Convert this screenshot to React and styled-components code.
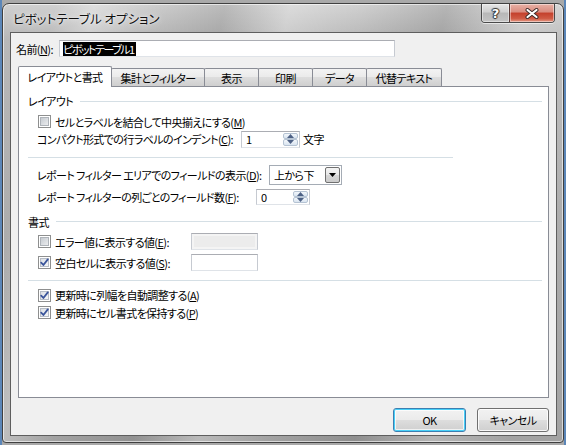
import styled, { createGlobalStyle } from 'styled-components';

const Global = createGlobalStyle`
  html, body { margin: 0; padding: 0; }
  body {
    width: 566px;
    height: 445px;
    overflow: hidden;
    background: linear-gradient(90deg, #5b86b8 0 2px, #a9a9a9 2px 564px, #5b86b8 564px);
    font-family: "Noto Sans CJK JP", "Noto Sans", sans-serif;
    font-feature-settings: "palt";
    font-size: 11px;
    letter-spacing: -0.6px;
    color: #000;
  }
  * { box-sizing: border-box; }
`;

const Window = styled.div`
  width: 562px;
  height: 440px;
  margin: 3px 0 0 2px;
  border: 1px solid #404040;
  border-radius: 7px 7px 4px 4px;
  padding: 0 6px 6px 7px;
  display: flex;
  flex-direction: column;
  background:
    linear-gradient(102deg, rgba(255,255,255,0) 8%, rgba(255,255,255,0.3) 14%, rgba(255,255,255,0) 22%,
      rgba(0,0,0,0.1) 34%, rgba(255,255,255,0.25) 44%, rgba(255,255,255,0) 55%,
      rgba(0,0,0,0.12) 68%, rgba(255,255,255,0.22) 80%, rgba(255,255,255,0) 92%),
    linear-gradient(180deg, #d0d0d0 0%, #b8b8b8 8%, #aaaaaa 60%, #a2a2a2 100%);
  box-shadow: inset 0 0 0 1px rgba(255,255,255,0.6);
`;

const TitleBar = styled.div`
  height: 28px;
  display: flex;
  align-items: flex-start;
`;

const Title = styled.div`
  align-self: center;
  padding-left: 3px;
  font-size: 12.5px;
  letter-spacing: 0;
  color: #111;
  text-shadow: 0 0 6px rgba(255,255,255,0.9), 0 0 2px rgba(255,255,255,0.8);
`;

const CaptionButtons = styled.div`
  margin-left: auto;
  margin-right: 2px;
  display: flex;
  height: 19px;
  border: 1px solid #4a4a4a;
  border-top: none;
  border-radius: 0 0 4px 4px;
  overflow: hidden;
  box-shadow: 0 1px 0 rgba(255,255,255,0.6);
`;

const CaptionButton = styled.div`
  width: ${(p) => p.$w}px;
  display: flex;
  align-items: center;
  justify-content: center;
  border-left: ${(p) => (p.$close ? '1px solid #5a3a36' : 'none')};
  box-shadow: inset 0 0 0 1px rgba(255,255,255,0.45);
  background: ${(p) =>
    p.$close
      ? 'linear-gradient(180deg, #e8b1a6 0%, #d98b7e 45%, #c4402c 50%, #cf5a44 80%, #e59a86 100%)'
      : 'linear-gradient(180deg, #e6e6e6 0%, #cfcfcf 45%, #b7b7b7 50%, #c4c4c4 100%)'};
  color: #fff;
  font-family: "DejaVu Sans", sans-serif;
  font-weight: bold;
  font-size: 13px;
  letter-spacing: 0;
  text-shadow: 0 0 1px #333, 1px 0 1px #333, -1px 0 1px #333, 0 1px 1px #333, 0 -1px 1px #333;
`;

const Client = styled.div`
  flex: 1;
  border: 1px solid #5e5e5e;
  background: #f0f0f0;
  padding: 7px 7px 0 5px;
  display: flex;
  flex-direction: column;
`;

const NameRow = styled.div`
  display: flex;
  align-items: center;
  height: 17px;
`;

const NameLabel = styled.span`
  width: 43px;
  white-space: nowrap;
`;

const TextBox = styled.div`
  width: ${(p) => p.$w}px;
  height: ${(p) => p.$h || 17}px;
  border: 1px solid #abadb3;
  border-left-color: #c6cad1;
  border-right-color: #c6cad1;
  border-bottom-color: #dfe3e8;
  background: ${(p) => (p.$disabled ? '#ececec' : '#fff')};
  box-shadow: ${(p) => (p.$disabled ? 'inset 0 0 0 2px #f4f4f4' : 'none')};
  display: flex;
  align-items: center;
  padding-left: 3px;
  overflow: hidden;
  white-space: nowrap;
`;

const Selected = styled.span`
  background: #000;
  color: #fff;
  line-height: 14px;
  letter-spacing: -1.5px;
  padding-right: 2px;
`;

const TabBar = styled.div`
  margin: 9px 0 0 2px;
  height: 20px;
  display: flex;
  align-items: flex-end;
`;

const Tab = styled.div`
  width: ${(p) => p.$w}px;
  height: ${(p) => (p.$active ? 21 : 18)}px;
  margin-left: ${(p) => (p.$first ? 0 : -1)}px;
  margin-bottom: ${(p) => (p.$active ? -1 : 0)}px;
  position: relative;
  z-index: ${(p) => (p.$active ? 2 : 1)};
  border: 1px solid #898c95;
  border-bottom: none;
  border-radius: 2px 2px 0 0;
  background: ${(p) =>
    p.$active
      ? '#fff'
      : 'linear-gradient(180deg, #f3f3f3 0%, #ebebeb 45%, #dddddd 50%, #cfcfcf 100%)'};
  display: flex;
  align-items: center;
  justify-content: center;
  white-space: nowrap;
  padding-top: ${(p) => (p.$active ? 0 : 1)}px;
`;

const Panel = styled.div`
  margin-left: 2px;
  height: 312px;
  border: 1px solid #898c95;
  background: #fff;
  padding: 5px 6px 0 9px;
  display: flex;
  flex-direction: column;
`;

const Header = styled.div`
  display: flex;
  align-items: center;
  height: ${(p) => p.$h}px;
  margin-top: ${(p) => p.$mt || 0}px;
  &::after {
    content: '';
    flex: 1;
    height: 1px;
    margin-left: 7px;
    background: #d5dfe5;
  }
`;

const Row = styled.div`
  display: flex;
  align-items: center;
  height: ${(p) => p.$h}px;
  margin-top: ${(p) => p.$mt || 0}px;
  padding-left: 9px;
`;

const Label = styled.div`
  width: ${(p) => p.$w}px;
  white-space: nowrap;
`;

const CheckLabel = styled.label`
  display: flex;
  align-items: center;
  margin-left: 1px;
  white-space: nowrap;
  svg { margin-right: 4px; flex: none; }
`;

const Unit = styled.span`
  margin-left: 3px;
`;

const Separator = styled.div`
  height: 1px;
  width: ${(p) => (p.$w ? `${p.$w}px` : 'auto')};
  margin-top: ${(p) => p.$mt}px;
  background: #d5dfe5;
`;

const Spin = styled.div`
  width: ${(p) => p.$w}px;
  height: ${(p) => p.$h}px;
  border: 1px solid #abadb3;
  border-left-color: #c6cad1;
  border-right-color: #c6cad1;
  border-bottom-color: #dfe3e8;
  background: #fff;
  display: flex;
  align-items: center;
  padding: 0 1px 0 4px;
`;

const SpinValue = styled.span`
  flex: 1;
`;

const SpinButtons = styled.div`
  width: 15px;
  height: 100%;
  display: flex;
  flex-direction: column;
  padding: 1px 0;
`;

const SpinHalf = styled.div`
  flex: 1;
  display: flex;
  align-items: center;
  justify-content: center;
  border: 1px solid #b5c3d3;
  border-radius: 2px;
  background: linear-gradient(180deg, #f3f7fb 0%, #d9e4f0 100%);
`;

const Combo = styled.div`
  width: 73px;
  height: 20px;
  border: 1px solid #a5acb5;
  background: #fff;
  display: flex;
  align-items: center;
  padding: 1px 1px 1px 4px;
`;

const ComboText = styled.span`
  flex: 1;
  white-space: nowrap;
`;

const ComboButton = styled.div`
  width: 15px;
  height: 100%;
  border: 1px solid #707070;
  border-radius: 2px;
  background: linear-gradient(180deg, #f4f4f4 0%, #e8e8e8 48%, #d6d6d6 52%, #cbcbcb 100%);
  display: flex;
  align-items: center;
  justify-content: center;
`;

const Footer = styled.div`
  margin-top: 10px;
  display: flex;
  justify-content: flex-end;
  gap: 11px;
`;

const Button = styled.div`
  width: ${(p) => p.$w}px;
  height: 24px;
  border: 1px solid ${(p) => (p.$default ? '#3c7fb1' : '#707070')};
  border-radius: 3px;
  box-shadow: ${(p) =>
    p.$default ? 'inset 0 0 0 1px #48d0f8, inset 0 0 0 2px rgba(255,255,255,0.7)' : 'inset 0 0 0 1px rgba(255,255,255,0.85)'};
  background: linear-gradient(180deg, #f2f2f2 0%, #ebebeb 48%, #dddddd 52%, #cfcfcf 100%);
  display: flex;
  align-items: center;
  justify-content: center;
  white-space: nowrap;
`;

const CheckBox = ({ checked }) => (
  <svg width="13" height="13" viewBox="0 0 13 13">
    <defs>
      <linearGradient id={checked ? 'cbOn' : 'cbOff'} x1="0" y1="0" x2="1" y2="1">
        <stop offset="0" stopColor={checked ? '#d9dde3' : '#c3c8ce'} />
        <stop offset="1" stopColor={checked ? '#f7f8f9' : '#eeeff1'} />
      </linearGradient>
    </defs>
    <rect x="0.5" y="0.5" width="12" height="12" fill="#fff" stroke="#8e8f8f" />
    <rect x="2.5" y="2.5" width="8" height="8" fill={`url(#${checked ? 'cbOn' : 'cbOff'})`} stroke={checked ? '#b6bcc6' : '#aeb3b9'} />
    {checked && (
      <path d="M3.2 6.6 L5.4 9 L9.8 3.4" fill="none" stroke="#3a549b" strokeWidth="1.8" strokeLinecap="round" strokeLinejoin="round" />
    )}
  </svg>
);

const Arrow = ({ up, color = '#4d6185' }) => (
  <svg width="7" height="4" viewBox="0 0 7 4">
    <path d={up ? 'M0 4 L3.5 0 L7 4 Z' : 'M0 0 L7 0 L3.5 4 Z'} fill={color} />
  </svg>
);

const Spinner = ({ value, w, h }) => (
  <Spin $w={w} $h={h}>
    <SpinValue>{value}</SpinValue>
    <SpinButtons>
      <SpinHalf><Arrow up /></SpinHalf>
      <SpinHalf><Arrow /></SpinHalf>
    </SpinButtons>
  </Spin>
);

const tabs = [
  ['レイアウトと書式', 94],
  ['集計とフィルター', 94],
  ['表示', 55],
  ['印刷', 55],
  ['データ', 55],
  ['代替テキスト', 76],
];

export default function App() {
  return (
    <>
      <Global />
      <Window>
        <TitleBar>
          <Title>ピボットテーブル オプション</Title>
          <CaptionButtons>
            <CaptionButton $w={27}>?</CaptionButton>
            <CaptionButton $w={45} $close>
              <svg width="14" height="11" viewBox="0 0 14 11">
                <path d="M2.5 2 L11.5 9 M11.5 2 L2.5 9" stroke="#3a2a28" strokeWidth="4" strokeLinecap="round" />
                <path d="M2.5 2 L11.5 9 M11.5 2 L2.5 9" stroke="#fff" strokeWidth="2.2" strokeLinecap="round" />
              </svg>
            </CaptionButton>
          </CaptionButtons>
        </TitleBar>
        <Client>
          <NameRow>
            <NameLabel>名前(<u>N</u>):</NameLabel>
            <TextBox $w={336} $h={17}>
              <Selected>ピボットテーブル1</Selected>
            </TextBox>
          </NameRow>

          <TabBar>
            {tabs.map(([t, w], i) => (
              <Tab key={t} $w={w} $first={i === 0} $active={i === 0}>{t}</Tab>
            ))}
          </TabBar>

          <Panel>
            <Header $h={18}>レイアウト</Header>
            <Row $h={17} $mt={3}>
              <CheckLabel><CheckBox /><span>セルとラベルを結合して中央揃えにする(<u>M</u>)</span></CheckLabel>
            </Row>
            <Row $h={18}>
              <Label $w={204}>コンパクト形式での行ラベルのインデント(<u>C</u>):</Label>
              <Spinner value="1" w={59} h={17} />
              <Unit>文字</Unit>
            </Row>
            <Separator $mt={9} $w={425} />
            <Row $h={22} $mt={6}>
              <Label $w={232}>レポート フィルター エリアでのフィールドの表示(<u>D</u>):</Label>
              <Combo>
                <ComboText>上から下</ComboText>
                <ComboButton><Arrow color="#000" /></ComboButton>
              </Combo>
            </Row>
            <Row $h={21}>
              <Label $w={219}>レポート フィルターの列ごとのフィールド数(<u>F</u>):</Label>
              <Spinner value="0" w={54} h={16} />
            </Row>
            <Header $h={19} $mt={5}>書式</Header>
            <Row $h={21}>
              <Label $w={154}>
                <CheckLabel><CheckBox /><span>エラー値に表示する値(<u>E</u>):</span></CheckLabel>
              </Label>
              <TextBox $w={67} $h={17} $disabled />
            </Row>
            <Row $h={21}>
              <Label $w={154}>
                <CheckLabel><CheckBox checked /><span>空白セルに表示する値(<u>S</u>):</span></CheckLabel>
              </Label>
              <TextBox $w={67} $h={17} />
            </Row>
            <Separator $mt={7} />
            <Row $h={18} $mt={5}>
              <CheckLabel><CheckBox checked /><span>更新時に列幅を自動調整する(<u>A</u>)</span></CheckLabel>
            </Row>
            <Row $h={17}>
              <CheckLabel><CheckBox checked /><span>更新時にセル書式を保持する(<u>P</u>)</span></CheckLabel>
            </Row>
          </Panel>

          <Footer>
            <Button $w={73} $default>OK</Button>
            <Button $w={72}>キャンセル</Button>
          </Footer>
        </Client>
      </Window>
    </>
  );
}
